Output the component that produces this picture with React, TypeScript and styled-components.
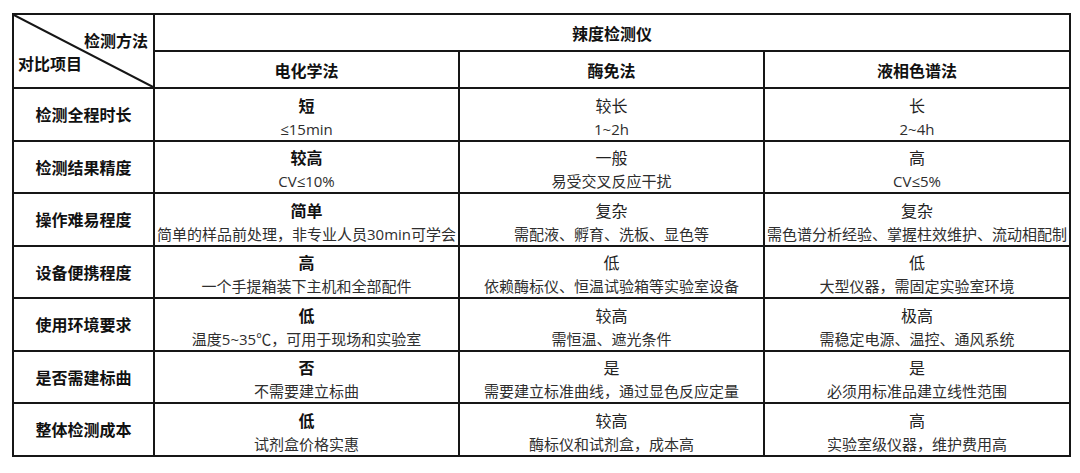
import styled, { createGlobalStyle } from "styled-components";

const GlobalStyle = createGlobalStyle`
  html, body {
    margin: 0;
    padding: 0;
    background: #ffffff;
  }
  body {
    font-family: "Open Sans", "Noto Sans CJK SC", sans-serif;
    color: #222;
  }
`;

interface Entry {
  main: string;
  note: string;
}

interface Row {
  label: string;
  values: Entry[];
}

const methods = ["电化学法", "酶免法", "液相色谱法"];

const rows: Row[] = [
  {
    label: "检测全程时长",
    values: [
      { main: "短", note: "≤15min" },
      { main: "较长", note: "1~2h" },
      { main: "长", note: "2~4h" },
    ],
  },
  {
    label: "检测结果精度",
    values: [
      { main: "较高", note: "CV≤10%" },
      { main: "一般", note: "易受交叉反应干扰" },
      { main: "高", note: "CV≤5%" },
    ],
  },
  {
    label: "操作难易程度",
    values: [
      { main: "简单", note: "简单的样品前处理，非专业人员30min可学会" },
      { main: "复杂", note: "需配液、孵育、洗板、显色等" },
      { main: "复杂", note: "需色谱分析经验、掌握柱效维护、流动相配制" },
    ],
  },
  {
    label: "设备便携程度",
    values: [
      { main: "高", note: "一个手提箱装下主机和全部配件" },
      { main: "低", note: "依赖酶标仪、恒温试验箱等实验室设备" },
      { main: "低", note: "大型仪器，需固定实验室环境" },
    ],
  },
  {
    label: "使用环境要求",
    values: [
      { main: "低", note: "温度5~35℃，可用于现场和实验室" },
      { main: "较高", note: "需恒温、遮光条件" },
      { main: "极高", note: "需稳定电源、温控、通风系统" },
    ],
  },
  {
    label: "是否需建标曲",
    values: [
      { main: "否", note: "不需要建立标曲" },
      { main: "是", note: "需要建立标准曲线，通过显色反应定量" },
      { main: "是", note: "必须用标准品建立线性范围" },
    ],
  },
  {
    label: "整体检测成本",
    values: [
      { main: "低", note: "试剂盒价格实惠" },
      { main: "较高", note: "酶标仪和试剂盒，成本高" },
      { main: "高", note: "实验室级仪器，维护费用高" },
    ],
  },
];

const Table = styled.table`
  margin: 13px 0 0 12px;
  width: 1057px;
  table-layout: fixed;
  border-collapse: collapse;
  border: 2px solid #161616;
`;

const Cell = styled.td`
  border: 2px solid #161616;
  padding: 0;
  text-align: center;
  vertical-align: middle;
  white-space: nowrap;
`;

const HeadCell = styled(Cell)`
  height: 34px;
  font-size: 16px;
  font-weight: 700;
  color: #111;
`;

const CornerCell = styled(Cell)`
  position: relative;
  height: 72px;
  font-size: 16px;
  font-weight: 700;
  color: #111;
`;

const Diagonal = styled.svg`
  position: absolute;
  inset: 0;
  width: 100%;
  height: 100%;
`;

const CornerTop = styled.span`
  position: absolute;
  right: 5px;
  top: 16px;
  line-height: 20px;
`;

const CornerBottom = styled.span`
  position: absolute;
  left: 4px;
  top: 39px;
  line-height: 20px;
`;

const LabelCell = styled(Cell)`
  height: 50.5px;
  font-size: 16px;
  font-weight: 700;
  color: #111;
`;

const ValueCell = styled(Cell)`
  height: 46px;
  padding-top: 4.5px;
`;

const Main = styled.div<{ $bold: boolean }>`
  font-size: 16px;
  line-height: 25px;
  font-weight: ${(p) => (p.$bold ? 700 : 400)};
  color: ${(p) => (p.$bold ? "#111" : "#222")};
`;

const Note = styled.div`
  font-size: 15px;
  line-height: 21px;
  color: #2e2e2e;
`;

export default function App() {
  return (
    <>
      <GlobalStyle />
      <Table>
        <colgroup>
          <col style={{ width: 141 }} />
          <col style={{ width: 305 }} />
          <col style={{ width: 305 }} />
          <col style={{ width: 306 }} />
        </colgroup>
        <tbody>
          <tr>
            <CornerCell rowSpan={2}>
              <Diagonal viewBox="0 0 100 100" preserveAspectRatio="none">
                <line
                  x1="0"
                  y1="0"
                  x2="100"
                  y2="100"
                  stroke="#161616"
                  strokeWidth="2"
                  vectorEffect="non-scaling-stroke"
                />
              </Diagonal>
              <CornerTop>检测方法</CornerTop>
              <CornerBottom>对比项目</CornerBottom>
            </CornerCell>
            <HeadCell colSpan={3}>辣度检测仪</HeadCell>
          </tr>
          <tr>
            {methods.map((m) => (
              <HeadCell key={m}>{m}</HeadCell>
            ))}
          </tr>
          {rows.map((row) => (
            <tr key={row.label}>
              <LabelCell>{row.label}</LabelCell>
              {row.values.map((v, i) => (
                <ValueCell key={i}>
                  <Main $bold={i === 0}>{v.main}</Main>
                  <Note>{v.note}</Note>
                </ValueCell>
              ))}
            </tr>
          ))}
        </tbody>
      </Table>
    </>
  );
}
